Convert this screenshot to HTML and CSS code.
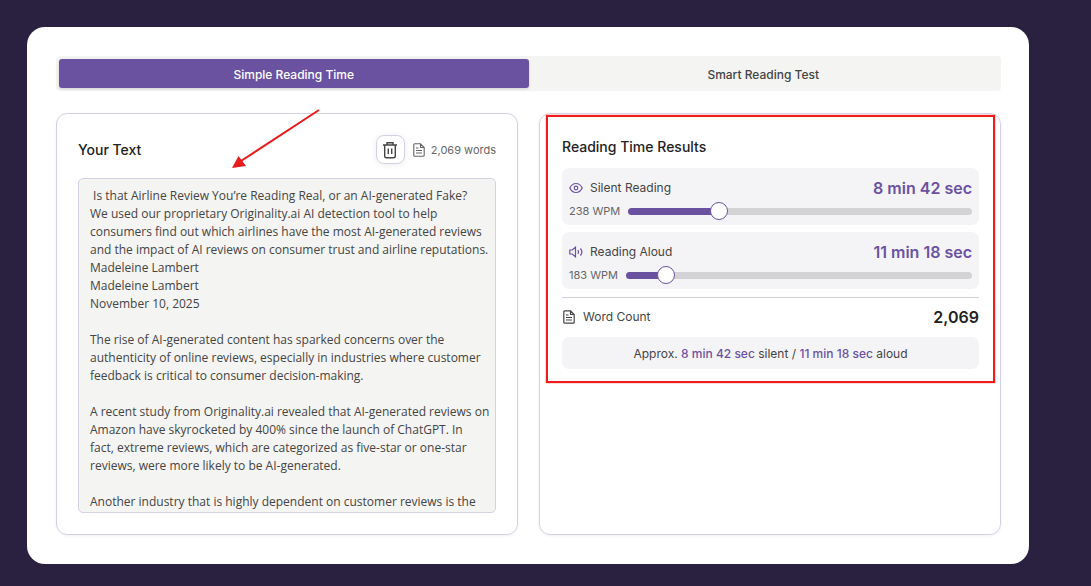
FILE: index.html
```html
<!DOCTYPE html>
<html lang="en">
<head>
  <meta charset="UTF-8">
  <title>Reading Time Calculator</title>
  <link rel="stylesheet" href="styles.css">
</head>
<body>
  <main class="card">
    <div class="tabs">
      <button type="button" class="tab active">Simple Reading Time</button>
      <button type="button" class="tab">Smart Reading Test</button>
    </div>

    <div class="panels">
      <section class="panel">
        <div class="panel-head">
          <h2><label for="text">Your Text</label></h2>
          <button type="button" class="clear" aria-label="Clear text">
            <svg width="16" height="18" viewBox="0 0 16 18" fill="none" stroke="#444" stroke-width="1.4">
              <path d="M1 4h14M5 4V1.8h6V4M2.7 4v11q0 1.8 1.8 1.8h7q1.8 0 1.8-1.8V4M6.3 7.5v5.5M9.7 7.5v5.5"/>
            </svg>
          </button>
          <svg width="12" height="14" viewBox="0 0 12 14" fill="none" stroke="#666" stroke-width="1.1">
            <path d="M1.8.8h5.7l3.7 3.7v7.7q0 1-1 1H1.8q-1 0-1-1V1.8q0-1 1-1zM7.5.8v3.7h3.7M3 5h2.5M3 7.5h6M3 10h6"/>
          </svg>
          <span class="words">2,069 words</span>
        </div>
        <textarea id="text" class="text" spellcheck="false"> Is that Airline Review You’re Reading Real, or an AI-generated Fake?
We used our proprietary Originality.ai AI detection tool to help
consumers find out which airlines have the most AI-generated reviews
and the impact of AI reviews on consumer trust and airline reputations.
Madeleine Lambert
Madeleine Lambert
November 10, 2025

The rise of AI-generated content has sparked concerns over the
authenticity of online reviews, especially in industries where customer
feedback is critical to consumer decision-making.

A recent study from Originality.ai revealed that AI-generated reviews on
Amazon have skyrocketed by 400% since the launch of ChatGPT. In
fact, extreme reviews, which are categorized as five-star or one-star
reviews, were more likely to be AI-generated.

Another industry that is highly dependent on customer reviews is the</textarea>
        <svg class="arrow" width="90" height="62" viewBox="0 0 90 62">
          <path d="M88 2L10 53" stroke="#e81c1c" stroke-width="2"/>
          <path d="M1 60L7.5 48L15 58z" fill="#e81c1c"/>
        </svg>
      </section>

      <section class="panel results">
        <h2>Reading Time Results</h2>

        <div class="rate">
          <div class="rate-top">
            <svg width="14" height="12" viewBox="0 0 14 12" fill="none" stroke="#6b52a1" stroke-width="1.2">
              <path d="M.8 6Q3 1.500 7 1.500T13.200 6Q11 10.500 7 10.500T.8 6z"/>
              <circle cx="7" cy="6" r="1.8"/>
            </svg>
            <label for="silent">Silent Reading</label>
            <strong>8 min 42 sec</strong>
          </div>
          <div class="rate-bottom">
            <span>238 WPM</span>
            <input type="range" id="silent" min="150" max="500" value="238" style="--fill: 26%">
          </div>
        </div>

        <div class="rate">
          <div class="rate-top">
            <svg width="14" height="12" viewBox="0 0 14 12" fill="none" stroke="#6b52a1" stroke-width="1.2">
              <path d="M.8 4h2.4L6.500 1.200v9.600L3.200 8H.8zM8.800 4.200q1.400 1.800 0 3.600M11.400 2.500q3 3.500 0 7"/>
            </svg>
            <label for="aloud">Reading Aloud</label>
            <strong>11 min 18 sec</strong>
          </div>
          <div class="rate-bottom">
            <span>183 WPM</span>
            <input type="range" id="aloud" min="150" max="500" value="183" style="--fill: 11%">
          </div>
        </div>

        <div class="count">
          <svg width="12" height="14" viewBox="0 0 12 14" fill="none" stroke="#444" stroke-width="1.2">
            <path d="M1.8.8h5.7l3.7 3.7v7.7q0 1-1 1H1.8q-1 0-1-1V1.8q0-1 1-1zM7.5.8v3.7h3.7M3 5h2.5M3 7.5h6M3 10h6"/>
          </svg>
          <span>Word Count</span>
          <strong>2,069</strong>
        </div>

        <p class="summary">Approx. <b>8 min 42 sec</b> silent / <b>11 min 18 sec</b> aloud</p>
        <div class="highlight"></div>
      </section>
    </div>
  </main>
</body>
</html>
```
FILE: styles.css
```css
* {
  box-sizing: border-box;
}
body {
  margin: 0;
  padding: 27px 62px 22px 27px;
  background: #29213f;
  color: #444;
  font-family: Inter, "Liberation Sans", sans-serif;
  font-size: 12px;
  line-height: 18px;
}
button, textarea {
  font: inherit;
}
h2 {
  margin: 0;
  color: #222;
  font-size: 14px;
  font-weight: 500;
}
.card {
  padding: 29px 28px 29px 29px;
  background: white;
  border-radius: 18px;
}
.tabs {
  display: flex;
  padding: 3px;
  background: #f4f4f2;
  border-radius: 4px;
}
.tab {
  flex: 1;
  height: 29px;
  padding: 2px 0 0;
  border: none;
  border-radius: 3px;
  background: none;
  color: #444;
  font-weight: 500;
  cursor: pointer;
}
.tab.active {
  background: #6b52a1;
  color: white;
  box-shadow: 0 1px 3px rgba(0,0,0,0.15);
}
.panels {
  display: grid;
  grid-template-columns: 1fr 1fr;
  gap: 21px;
  margin-top: 22px;
}
.panel {
  position: relative;
  padding: 21px;
  border: 1px solid #d7d0e2;
  border-radius: 11px;
  box-shadow: 0 1px 3px rgba(0,0,0,0.06);
}
.panel-head {
  display: flex;
  align-items: center;
  margin-bottom: 14px;
}
.panel-head h2 {
  flex: 1;
}
.clear {
  display: flex;
  align-items: center;
  justify-content: center;
  width: 29px;
  height: 29px;
  margin-right: 8px;
  padding: 0;
  border: 1px solid #d7d0e2;
  border-radius: 8px;
  background: white;
  box-shadow: 0 1px 6px rgba(0,0,0,0.08);
}
.words {
  margin-left: 6px;
  color: #666;
  font-size: 11px;
}
.text {
  display: block;
  width: 100%;
  height: 335px;
  padding: 8px 0 0 11px;
  border: 1px solid #d7d0e2;
  border-radius: 5px;
  background: #f4f4f2;
  color: #444;
  font-family: "Open Sans", "Liberation Sans", sans-serif;
  white-space: pre;
  resize: none;
  overflow: hidden;
}
.arrow {
  position: absolute;
  top: -6px;
  left: 174px;
}
.results {
  padding-left: 22px;
}
.results h2 {
  margin: 3px 0 12px;
}
.rate {
  height: 57px;
  margin-bottom: 7px;
  padding: 11px 7px 0;
  background: #f4f4f7;
  border-radius: 7px;
}
.rate-top, .rate-bottom, .count {
  display: flex;
  align-items: center;
}
.rate-top label, .count span {
  flex: 1;
  margin-left: 7px;
}
.rate-top strong {
  color: #6b52a1;
  font-size: 16px;
  font-weight: 600;
}
.rate-bottom {
  gap: 8px;
  margin-top: 5px;
  color: #666;
  font-size: 11px;
}
input[type="range"] {
  flex: 1;
  min-width: 0;
  height: 7px;
  margin: 0;
  border-radius: 4px;
  background: linear-gradient(to right, #6b52a1 var(--fill), #d3d3d6 var(--fill));
  appearance: none;
}
input[type="range"]::-webkit-slider-thumb {
  width: 18px;
  height: 18px;
  border: 1px solid #6b52a1;
  border-radius: 50%;
  background: white;
  appearance: none;
}
.count {
  margin-top: 8px;
  padding: 10px 0 0 1px;
  border-top: 1px solid #d0cfdb;
}
.count span {
  margin-left: 8px;
}
.count strong {
  color: #222;
  font-size: 16px;
  font-weight: 600;
}
.summary {
  margin: 11px 0 0;
  padding: 8px 7px 6px;
  background: #f4f4f7;
  border-radius: 7px;
  text-align: center;
}
.summary b {
  color: #6b52a1;
  font-weight: 500;
}
.highlight {
  position: absolute;
  top: 1px;
  left: 6px;
  right: 5px;
  height: 268px;
  border: 2px solid #ee1c1c;
  box-shadow: 0 0 1px #ee1c1c;
  pointer-events: none;
}
```
